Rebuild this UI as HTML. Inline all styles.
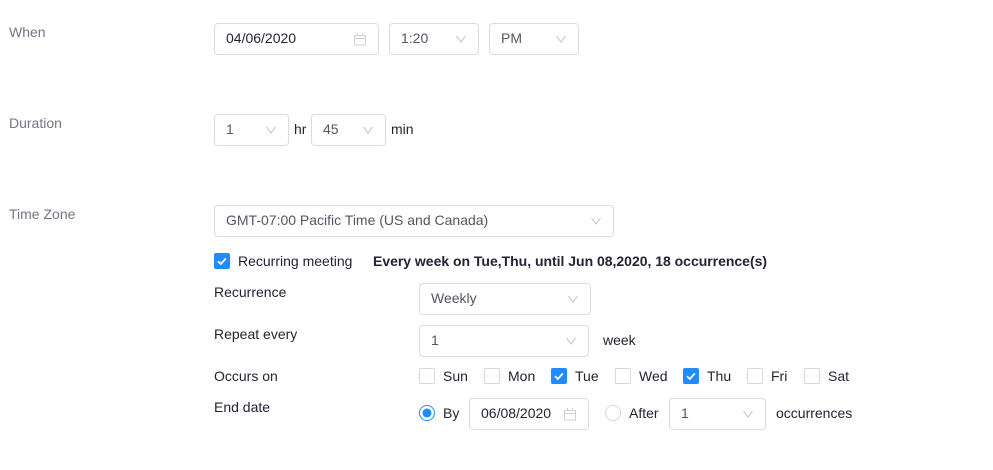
<!DOCTYPE html>
<html><head><meta charset="utf-8">
<style>
html,body{margin:0;padding:0;background:#fff;}
body{width:993px;height:470px;position:relative;overflow:hidden;font-family:"Liberation Sans",sans-serif;font-size:14px;color:#232333;}
.t{position:absolute;white-space:nowrap;line-height:16px;}
.l{color:#747487;}
.b{position:absolute;box-sizing:border-box;border:1px solid #dcdce0;border-radius:4px;height:32px;background:#fff;}
.v{position:absolute;white-space:nowrap;line-height:16px;color:#555562;}
.c{position:absolute;width:16px;height:16px;box-sizing:border-box;border:1px solid #d8d8dc;border-radius:2px;background:#fff;}
.c.on{background:#1f8bff;border-color:#1f8bff;}
svg{position:absolute;overflow:visible;}
</style></head><body>
<div class="t l" style="left:9px;top:24px">When</div>
<div class="t l" style="left:9px;top:115px">Duration</div>
<div class="t l" style="left:9px;top:206px">Time Zone</div>

<div class="b" style="left:214px;top:23px;width:165px"></div>
<div class="t" style="left:226px;top:30px">04/06/2020</div>
<svg style="left:353px;top:33px" width="14" height="13" fill="none" stroke="#d0d0d4"><path d="M1.5 2.5h11v9.5h-11zM1.5 5.5h11M4.5 0v3M9.5 0v3"/></svg>
<div class="b" style="left:389px;top:23px;width:90px"></div>
<div class="v" style="left:401px;top:30px">1:20</div>
<svg style="left:456px;top:35px" width="10" height="8" fill="none" stroke="#c0c0c6"><path d="M.5 1l4.5 6 4.5-6"/></svg>
<div class="b" style="left:489px;top:23px;width:90px"></div>
<div class="v" style="left:501px;top:30px">PM</div>
<svg style="left:556px;top:35px" width="10" height="8" fill="none" stroke="#c0c0c6"><path d="M.5 1l4.5 6 4.5-6"/></svg>

<div class="b" style="left:214px;top:114px;width:75px"></div>
<div class="v" style="left:226px;top:121px">1</div>
<svg style="left:266px;top:126px" width="10" height="8" fill="none" stroke="#c0c0c6"><path d="M.5 1l4.5 6 4.5-6"/></svg>
<div class="t" style="left:294px;top:121px">hr</div>
<div class="b" style="left:311px;top:114px;width:75px"></div>
<div class="v" style="left:323px;top:121px">45</div>
<svg style="left:363px;top:126px" width="10" height="8" fill="none" stroke="#c0c0c6"><path d="M.5 1l4.5 6 4.5-6"/></svg>
<div class="t" style="left:391px;top:121px">min</div>

<div class="b" style="left:214px;top:205px;width:400px"></div>
<div class="v" style="left:226px;top:212px">GMT-07:00 Pacific Time (US and Canada)</div>
<svg style="left:591px;top:217px" width="10" height="8" fill="none" stroke="#c0c0c6"><path d="M.5 1l4.5 6 4.5-6"/></svg>

<div class="c on" style="left:214px;top:253px"></div>
<svg style="left:214px;top:253px" width="16" height="16" fill="none" stroke="#fff" stroke-width="1.8"><path d="M4 8.2l2.8 2.8 5-5.5"/></svg>
<div class="t" style="left:238px;top:253px">Recurring meeting</div>
<div class="t" style="left:373px;top:253px;font-weight:bold;letter-spacing:-.017px">Every week on Tue,Thu, until Jun 08,2020, 18 occurrence(s)</div>

<div class="t" style="left:214px;top:284px">Recurrence</div>
<div class="b" style="left:419px;top:283px;width:172px"></div>
<div class="v" style="left:431px;top:290px">Weekly</div>
<svg style="left:568px;top:295px" width="10" height="8" fill="none" stroke="#c0c0c6"><path d="M.5 1l4.5 6 4.5-6"/></svg>

<div class="t" style="left:214px;top:326px">Repeat every</div>
<div class="b" style="left:419px;top:325px;width:170px"></div>
<div class="v" style="left:431px;top:332px">1</div>
<svg style="left:566px;top:337px" width="10" height="8" fill="none" stroke="#c0c0c6"><path d="M.5 1l4.5 6 4.5-6"/></svg>
<div class="t" style="left:603px;top:332px">week</div>

<div class="t" style="left:214px;top:368px">Occurs on</div>
<div class="c" style="left:419px;top:368px"></div><div class="t" style="left:443px;top:368px">Sun</div>
<div class="c" style="left:484px;top:368px"></div><div class="t" style="left:508px;top:368px">Mon</div>
<div class="c on" style="left:551px;top:368px"></div>
<svg style="left:551px;top:368px" width="16" height="16" fill="none" stroke="#fff" stroke-width="1.8"><path d="M4 8.2l2.8 2.8 5-5.5"/></svg>
<div class="t" style="left:575px;top:368px">Tue</div>
<div class="c" style="left:615px;top:368px"></div><div class="t" style="left:639px;top:368px">Wed</div>
<div class="c on" style="left:683px;top:368px"></div>
<svg style="left:683px;top:368px" width="16" height="16" fill="none" stroke="#fff" stroke-width="1.8"><path d="M4 8.2l2.8 2.8 5-5.5"/></svg>
<div class="t" style="left:707px;top:368px">Thu</div>
<div class="c" style="left:747px;top:368px"></div><div class="t" style="left:771px;top:368px">Fri</div>
<div class="c" style="left:804px;top:368px"></div><div class="t" style="left:828px;top:368px">Sat</div>

<div class="t" style="left:214px;top:399px">End date</div>
<svg style="left:419px;top:405px" width="16" height="16"><circle cx="8" cy="8" r="7.5" fill="#fff" stroke="#1f8bff"/><circle cx="8" cy="8" r="4.5" fill="#1f8bff"/></svg>
<div class="t" style="left:443px;top:405px">By</div>
<div class="b" style="left:469px;top:398px;width:120px"></div>
<div class="t" style="left:481px;top:405px">06/08/2020</div>
<svg style="left:563px;top:408px" width="14" height="13" fill="none" stroke="#d0d0d4"><path d="M1.5 2.5h11v9.5h-11zM1.5 5.5h11M4.5 0v3M9.5 0v3"/></svg>
<svg style="left:605px;top:405px" width="16" height="16"><circle cx="8" cy="8" r="7.5" fill="#fff" stroke="#d8d8dc"/></svg>
<div class="t" style="left:629px;top:405px">After</div>
<div class="b" style="left:669px;top:398px;width:97px"></div>
<div class="v" style="left:681px;top:405px">1</div>
<svg style="left:743px;top:410px" width="10" height="8" fill="none" stroke="#c0c0c6"><path d="M.5 1l4.5 6 4.5-6"/></svg>
<div class="t" style="left:776px;top:405px">occurrences</div>
</body></html>
